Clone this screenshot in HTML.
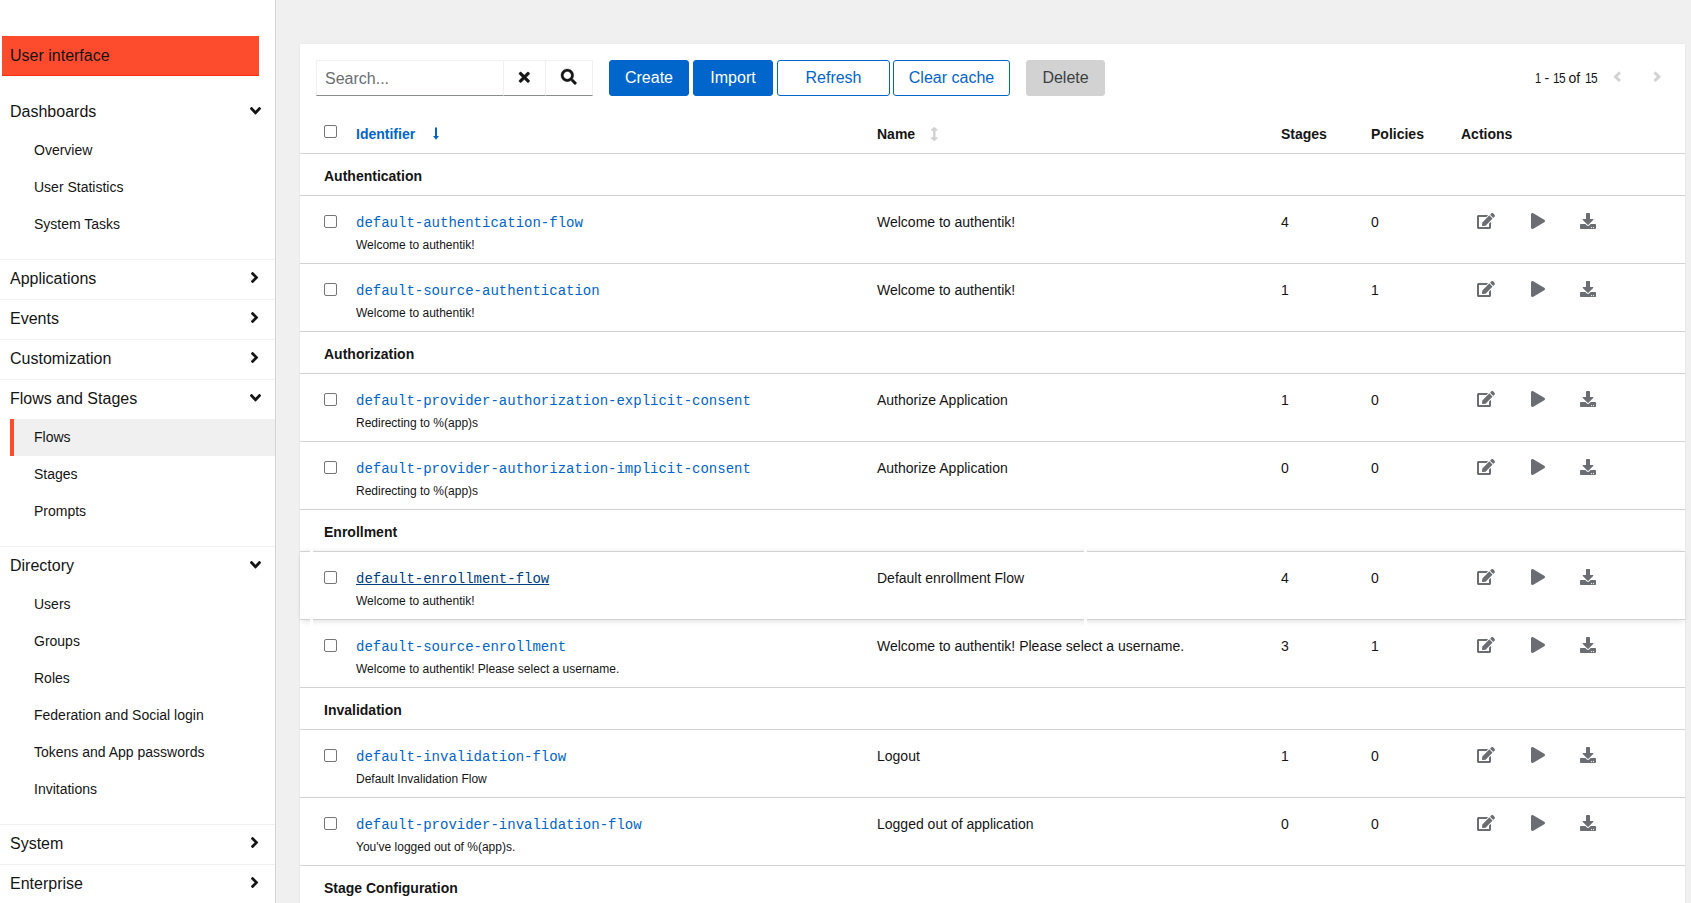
<!DOCTYPE html><html><head><meta charset="utf-8"><title>Flows - authentik</title><style>html,body{margin:0;padding:0;width:1691px;height:903px;overflow:hidden;background:#f0f0f0;}body{position:relative;font-family:"Liberation Sans", sans-serif;}.cb{position:absolute;width:13px;height:13px;box-sizing:border-box;border:1px solid #767676;border-radius:2px;background:#fff;}.hl{position:absolute;height:1px;background:#d2d2d2;}</style></head><body>
<div style="position:absolute;left:0;top:0;width:275px;height:903px;background:#fff;"></div>
<div style="position:absolute;left:275px;top:0;width:1px;height:903px;background:#d2d2d2;"></div>
<div style="position:absolute;left:276px;top:0;width:1px;height:903px;background:#f3f3f3;"></div>
<div style="position:absolute;left:2px;top:36px;width:257px;height:40px;background:#fd4b2d;"></div>
<div style="position:absolute;left:2px;top:75px;width:257px;height:1px;background:#ff2f12;"></div>
<div style="position:absolute;left:10px;top:48.46px;font-family:'Liberation Sans', sans-serif;font-size:16px;line-height:16px;font-weight:400;color:#151515;white-space:nowrap">User interface</div>
<div style="position:absolute;left:10px;top:104.46px;font-family:'Liberation Sans', sans-serif;font-size:16px;line-height:16px;font-weight:400;color:#151515;white-space:nowrap">Dashboards</div><svg style="position:absolute;left:250.3px;top:107.3px;width:11px;height:7.5px;overflow:visible" viewBox="0 152 320 208" preserveAspectRatio="none"><path fill="#151515" d="M143 352.3L7 216.3c-9.4-9.4-9.4-24.6 0-33.9l22.6-22.6c9.4-9.4 24.6-9.4 33.9 0l96.4 96.4 96.4-96.4c9.4-9.4 24.6-9.4 33.9 0l22.6 22.6c9.4 9.4 9.4 24.6 0 33.9l-136 136c-9.2 9.4-24.4 9.4-33.8 0z"/></svg>
<div style="position:absolute;left:34px;top:143.15px;font-family:'Liberation Sans', sans-serif;font-size:14px;line-height:14px;font-weight:400;color:#151515;white-space:nowrap">Overview</div>
<div style="position:absolute;left:34px;top:180.15px;font-family:'Liberation Sans', sans-serif;font-size:14px;line-height:14px;font-weight:400;color:#151515;white-space:nowrap">User Statistics</div>
<div style="position:absolute;left:34px;top:217.15px;font-family:'Liberation Sans', sans-serif;font-size:14px;line-height:14px;font-weight:400;color:#151515;white-space:nowrap">System Tasks</div>
<div class="hl" style="left:0;top:259px;width:275px;background:#f0f0f0"></div><div style="position:absolute;left:10px;top:271.46px;font-family:'Liberation Sans', sans-serif;font-size:16px;line-height:16px;font-weight:400;color:#151515;white-space:nowrap">Applications</div><svg style="position:absolute;left:250.8px;top:271.9px;width:7.2px;height:11px;overflow:visible" viewBox="24 96 208 320" preserveAspectRatio="none"><path fill="#151515" d="M224.3 273l-136 136c-9.4 9.4-24.6 9.4-33.9 0l-22.6-22.6c-9.4-9.4-9.4-24.6 0-33.9l96.4-96.4-96.4-96.4c-9.4-9.4-9.4-24.6 0-33.9L54.3 103c9.4-9.4 24.6-9.4 33.9 0l136 136c9.5 9.4 9.5 24.6.1 34z"/></svg>
<div class="hl" style="left:0;top:299px;width:275px;background:#f0f0f0"></div><div style="position:absolute;left:10px;top:311.46px;font-family:'Liberation Sans', sans-serif;font-size:16px;line-height:16px;font-weight:400;color:#151515;white-space:nowrap">Events</div><svg style="position:absolute;left:250.8px;top:311.9px;width:7.2px;height:11px;overflow:visible" viewBox="24 96 208 320" preserveAspectRatio="none"><path fill="#151515" d="M224.3 273l-136 136c-9.4 9.4-24.6 9.4-33.9 0l-22.6-22.6c-9.4-9.4-9.4-24.6 0-33.9l96.4-96.4-96.4-96.4c-9.4-9.4-9.4-24.6 0-33.9L54.3 103c9.4-9.4 24.6-9.4 33.9 0l136 136c9.5 9.4 9.5 24.6.1 34z"/></svg>
<div class="hl" style="left:0;top:339px;width:275px;background:#f0f0f0"></div><div style="position:absolute;left:10px;top:351.46px;font-family:'Liberation Sans', sans-serif;font-size:16px;line-height:16px;font-weight:400;color:#151515;white-space:nowrap">Customization</div><svg style="position:absolute;left:250.8px;top:351.9px;width:7.2px;height:11px;overflow:visible" viewBox="24 96 208 320" preserveAspectRatio="none"><path fill="#151515" d="M224.3 273l-136 136c-9.4 9.4-24.6 9.4-33.9 0l-22.6-22.6c-9.4-9.4-9.4-24.6 0-33.9l96.4-96.4-96.4-96.4c-9.4-9.4-9.4-24.6 0-33.9L54.3 103c9.4-9.4 24.6-9.4 33.9 0l136 136c9.5 9.4 9.5 24.6.1 34z"/></svg>
<div class="hl" style="left:0;top:379px;width:275px;background:#f0f0f0"></div><div style="position:absolute;left:10px;top:391.46px;font-family:'Liberation Sans', sans-serif;font-size:16px;line-height:16px;font-weight:400;color:#151515;white-space:nowrap">Flows and Stages</div><svg style="position:absolute;left:250.3px;top:394.3px;width:11px;height:7.5px;overflow:visible" viewBox="0 152 320 208" preserveAspectRatio="none"><path fill="#151515" d="M143 352.3L7 216.3c-9.4-9.4-9.4-24.6 0-33.9l22.6-22.6c9.4-9.4 24.6-9.4 33.9 0l96.4 96.4 96.4-96.4c9.4-9.4 24.6-9.4 33.9 0l22.6 22.6c9.4 9.4 9.4 24.6 0 33.9l-136 136c-9.2 9.4-24.4 9.4-33.8 0z"/></svg>
<div style="position:absolute;left:10px;top:419px;width:265px;height:37px;background:#f0f0f0;"></div><div style="position:absolute;left:10px;top:419px;width:4px;height:37px;background:#fd4b2d;"></div><div style="position:absolute;left:34px;top:430.15px;font-family:'Liberation Sans', sans-serif;font-size:14px;line-height:14px;font-weight:400;color:#151515;white-space:nowrap">Flows</div>
<div style="position:absolute;left:34px;top:467.15px;font-family:'Liberation Sans', sans-serif;font-size:14px;line-height:14px;font-weight:400;color:#151515;white-space:nowrap">Stages</div>
<div style="position:absolute;left:34px;top:504.15px;font-family:'Liberation Sans', sans-serif;font-size:14px;line-height:14px;font-weight:400;color:#151515;white-space:nowrap">Prompts</div>
<div class="hl" style="left:0;top:546px;width:275px;background:#f0f0f0"></div><div style="position:absolute;left:10px;top:558.46px;font-family:'Liberation Sans', sans-serif;font-size:16px;line-height:16px;font-weight:400;color:#151515;white-space:nowrap">Directory</div><svg style="position:absolute;left:250.3px;top:561.3px;width:11px;height:7.5px;overflow:visible" viewBox="0 152 320 208" preserveAspectRatio="none"><path fill="#151515" d="M143 352.3L7 216.3c-9.4-9.4-9.4-24.6 0-33.9l22.6-22.6c9.4-9.4 24.6-9.4 33.9 0l96.4 96.4 96.4-96.4c9.4-9.4 24.6-9.4 33.9 0l22.6 22.6c9.4 9.4 9.4 24.6 0 33.9l-136 136c-9.2 9.4-24.4 9.4-33.8 0z"/></svg>
<div style="position:absolute;left:34px;top:597.15px;font-family:'Liberation Sans', sans-serif;font-size:14px;line-height:14px;font-weight:400;color:#151515;white-space:nowrap">Users</div>
<div style="position:absolute;left:34px;top:634.15px;font-family:'Liberation Sans', sans-serif;font-size:14px;line-height:14px;font-weight:400;color:#151515;white-space:nowrap">Groups</div>
<div style="position:absolute;left:34px;top:671.15px;font-family:'Liberation Sans', sans-serif;font-size:14px;line-height:14px;font-weight:400;color:#151515;white-space:nowrap">Roles</div>
<div style="position:absolute;left:34px;top:708.15px;font-family:'Liberation Sans', sans-serif;font-size:14px;line-height:14px;font-weight:400;color:#151515;white-space:nowrap">Federation and Social login</div>
<div style="position:absolute;left:34px;top:745.15px;font-family:'Liberation Sans', sans-serif;font-size:14px;line-height:14px;font-weight:400;color:#151515;white-space:nowrap">Tokens and App passwords</div>
<div style="position:absolute;left:34px;top:782.15px;font-family:'Liberation Sans', sans-serif;font-size:14px;line-height:14px;font-weight:400;color:#151515;white-space:nowrap">Invitations</div>
<div class="hl" style="left:0;top:824px;width:275px;background:#f0f0f0"></div><div style="position:absolute;left:10px;top:836.46px;font-family:'Liberation Sans', sans-serif;font-size:16px;line-height:16px;font-weight:400;color:#151515;white-space:nowrap">System</div><svg style="position:absolute;left:250.8px;top:836.9px;width:7.2px;height:11px;overflow:visible" viewBox="24 96 208 320" preserveAspectRatio="none"><path fill="#151515" d="M224.3 273l-136 136c-9.4 9.4-24.6 9.4-33.9 0l-22.6-22.6c-9.4-9.4-9.4-24.6 0-33.9l96.4-96.4-96.4-96.4c-9.4-9.4-9.4-24.6 0-33.9L54.3 103c9.4-9.4 24.6-9.4 33.9 0l136 136c9.5 9.4 9.5 24.6.1 34z"/></svg>
<div class="hl" style="left:0;top:864px;width:275px;background:#f0f0f0"></div><div style="position:absolute;left:10px;top:876.46px;font-family:'Liberation Sans', sans-serif;font-size:16px;line-height:16px;font-weight:400;color:#151515;white-space:nowrap">Enterprise</div><svg style="position:absolute;left:250.8px;top:876.9px;width:7.2px;height:11px;overflow:visible" viewBox="24 96 208 320" preserveAspectRatio="none"><path fill="#151515" d="M224.3 273l-136 136c-9.4 9.4-24.6 9.4-33.9 0l-22.6-22.6c-9.4-9.4-9.4-24.6 0-33.9l96.4-96.4-96.4-96.4c-9.4-9.4-9.4-24.6 0-33.9L54.3 103c9.4-9.4 24.6-9.4 33.9 0l136 136c9.5 9.4 9.5 24.6.1 34z"/></svg>
<div style="position:absolute;left:300px;top:44px;width:1385px;height:880px;background:#fff;box-shadow:0 1px 2px 0 rgba(3,3,3,0.06),0 0 2px 0 rgba(3,3,3,0.04);"></div>
<div style="position:absolute;left:316px;top:60px;width:188px;height:36px;box-sizing:border-box;border:1px solid #f0f0f0;border-bottom-color:#8a8d90;background:#fff;"></div>
<div style="position:absolute;left:325px;top:71.46px;font-family:'Liberation Sans', sans-serif;font-size:16px;line-height:16px;font-weight:400;color:#6a6e73;white-space:nowrap">Search...</div>
<div style="position:absolute;left:504px;top:60px;width:42px;height:36px;box-sizing:border-box;border:1px solid #f0f0f0;border-left:0;border-bottom-color:#8a8d90;"></div>
<div style="position:absolute;left:546px;top:60px;width:47px;height:36px;box-sizing:border-box;border:1px solid #f0f0f0;border-left:0;border-bottom-color:#8a8d90;"></div>
<svg style="position:absolute;left:519.3px;top:71.8px;width:10.6px;height:10.6px;overflow:visible" viewBox="0 80 352 352" preserveAspectRatio="none"><path fill="#151515" stroke="#151515" stroke-width="16" d="M242.72 256l100.07-100.07c12.28-12.28 12.28-32.19 0-44.48l-22.24-22.24c-12.28-12.28-32.19-12.28-44.48 0L176 189.28 75.93 89.21c-12.28-12.28-32.19-12.28-44.48 0L9.21 111.45c-12.28 12.28-12.28 32.19 0 44.48L109.28 256 9.21 356.07c-12.28 12.28-12.28 32.19 0 44.48l22.24 22.24c12.28 12.28 32.2 12.28 44.48 0L176 322.72l100.07 100.07c12.28 12.28 32.2 12.28 44.480 0l22.24-22.24c12.28-12.28 12.28-32.19 0-44.48L242.72 256z"/></svg>
<svg style="position:absolute;left:561.3px;top:69.3px;width:15.6px;height:15.6px;overflow:visible" viewBox="0 0 512 512" preserveAspectRatio="none"><path fill="#151515" stroke="#151515" stroke-width="12" d="M505 442.7L405.3 343c-4.5-4.5-10.6-7-17-7H372c27.6-35.3 44-79.7 44-128C416 93.1 322.9 0 208 0S0 93.1 0 208s93.1 208 208 208c48.3 0 92.7-16.4 128-44v16.3c0 6.4 2.5 12.5 7 17l99.7 99.7c9.4 9.4 24.6 9.4 33.9 0l28.3-28.3c9.4-9.4 9.4-24.6.1-34zM208 336c-70.7 0-128-57.2-128-128 0-70.7 57.2-128 128-128 70.7 0 128 57.2 128 128 0 70.7-57.2 128-128 128z"/></svg>
<div style="position:absolute;left:609px;top:60px;width:80px;height:36px;box-sizing:border-box;border:1px solid #0066cc;border-radius:3px;background:#0066cc;color:#fff;font-size:16px;line-height:34px;text-align:center;white-space:nowrap">Create</div>
<div style="position:absolute;left:693px;top:60px;width:80px;height:36px;box-sizing:border-box;border:1px solid #0066cc;border-radius:3px;background:#0066cc;color:#fff;font-size:16px;line-height:34px;text-align:center;white-space:nowrap">Import</div>
<div style="position:absolute;left:777px;top:60px;width:113px;height:36px;box-sizing:border-box;border:1px solid #0066cc;border-radius:3px;background:#fff;color:#0066cc;font-size:16px;line-height:34px;text-align:center;white-space:nowrap">Refresh</div>
<div style="position:absolute;left:893px;top:60px;width:117px;height:36px;box-sizing:border-box;border:1px solid #0066cc;border-radius:3px;background:#fff;color:#0066cc;font-size:16px;line-height:34px;text-align:center;white-space:nowrap">Clear cache</div>
<div style="position:absolute;left:1026px;top:60px;width:79px;height:36px;box-sizing:border-box;border:1px solid #d2d2d2;border-radius:3px;background:#d2d2d2;color:#3c3f42;font-size:16px;line-height:34px;text-align:center;white-space:nowrap">Delete</div>
<div style="position:absolute;left:1535px;top:71.15px;font-family:'Liberation Sans', sans-serif;font-size:14px;line-height:14px;font-weight:400;color:#151515;white-space:nowrap;transform:scaleX(0.8);transform-origin:0 0">1</div>
<div style="position:absolute;left:1544.5px;top:71.15px;font-family:'Liberation Sans', sans-serif;font-size:14px;line-height:14px;font-weight:400;color:#151515;white-space:nowrap">-</div>
<div style="position:absolute;left:1552.5px;top:71.15px;font-family:'Liberation Sans', sans-serif;font-size:14px;line-height:14px;font-weight:400;color:#151515;white-space:nowrap;letter-spacing:-0.6px;transform:scaleX(0.85);transform-origin:0 0">15</div>
<div style="position:absolute;left:1568.5px;top:71.15px;font-family:'Liberation Sans', sans-serif;font-size:14px;line-height:14px;font-weight:400;color:#151515;white-space:nowrap">of</div>
<div style="position:absolute;left:1584.5px;top:71.15px;font-family:'Liberation Sans', sans-serif;font-size:14px;line-height:14px;font-weight:400;color:#151515;white-space:nowrap;letter-spacing:-0.6px;transform:scaleX(0.85);transform-origin:0 0">15</div>
<svg style="position:absolute;left:1613.9px;top:72.2px;width:6.4px;height:9.4px;overflow:visible" viewBox="24 96 208 320" preserveAspectRatio="none"><path fill="#d2d2d2" stroke="#d2d2d2" stroke-width="24" d="M31.7 239l136-136c9.4-9.4 24.6-9.4 33.9 0l22.6 22.6c9.4 9.4 9.4 24.6 0 33.9L127.9 256l96.4 96.4c9.4 9.4 9.4 24.6 0 33.9L201.7 409c-9.4 9.4-24.6 9.4-33.9 0l-136-136c-9.5-9.4-9.5-24.6-.1-34z"/></svg>
<svg style="position:absolute;left:1653.6px;top:72.2px;width:6.4px;height:9.4px;overflow:visible" viewBox="24 96 208 320" preserveAspectRatio="none"><path fill="#d2d2d2" stroke="#d2d2d2" stroke-width="24" d="M224.3 273l-136 136c-9.4 9.4-24.6 9.4-33.9 0l-22.6-22.6c-9.4-9.4-9.4-24.6 0-33.9l96.4-96.4-96.4-96.4c-9.4-9.4-9.4-24.6 0-33.9L54.3 103c9.4-9.4 24.6-9.4 33.9 0l136 136c9.5 9.4 9.5 24.6.1 34z"/></svg>
<div class="cb" style="left:324px;top:125px;"></div>
<div style="position:absolute;left:356px;top:127.15px;font-family:'Liberation Sans', sans-serif;font-size:14px;line-height:14px;font-weight:700;color:#0066cc;white-space:nowrap">Identifier</div>
<svg style="position:absolute;left:425px;top:122px;width:20px;height:24px" viewBox="0 0 20 24"><path fill="#0066cc" d="M10 5.6H12V14.1H14L11 17.8L8 14.1H10Z"/></svg>
<div style="position:absolute;left:877px;top:127.15px;font-family:'Liberation Sans', sans-serif;font-size:14px;line-height:14px;font-weight:700;color:#151515;white-space:nowrap">Name</div>
<svg style="position:absolute;left:931.2px;top:126.8px;width:6.6px;height:14px;overflow:visible" viewBox="20 0 216 512" preserveAspectRatio="none"><path fill="#d2d2d2" d="M214.059 377.941H168V134.059h46.059c21.382 0 32.09-25.851 16.971-40.971L144.971 7.029c-9.373-9.373-24.568-9.373-33.941 0L24.971 93.088c-15.119 15.119-4.411 40.971 16.971 40.971H88v243.882H41.941c-21.382 0-32.09 25.851-16.971 40.971l86.059 86.059c9.373 9.373 24.568 9.373 33.941 0l86.059-86.059c15.12-15.119 4.412-40.971-16.97-40.971z"/></svg>
<div style="position:absolute;left:1281px;top:127.15px;font-family:'Liberation Sans', sans-serif;font-size:14px;line-height:14px;font-weight:700;color:#151515;white-space:nowrap">Stages</div>
<div style="position:absolute;left:1371px;top:127.15px;font-family:'Liberation Sans', sans-serif;font-size:14px;line-height:14px;font-weight:700;color:#151515;white-space:nowrap">Policies</div>
<div style="position:absolute;left:1461px;top:127.15px;font-family:'Liberation Sans', sans-serif;font-size:14px;line-height:14px;font-weight:700;color:#151515;white-space:nowrap">Actions</div>
<div class="hl" style="left:300px;top:153px;width:1385px;"></div>
<div style="position:absolute;left:324px;top:169.15px;font-family:'Liberation Sans', sans-serif;font-size:14px;line-height:14px;font-weight:700;color:#151515;white-space:nowrap">Authentication</div>
<div class="hl" style="left:300px;top:195px;width:1385px;"></div>
<div class="cb" style="left:324px;top:215px;"></div>
<div style="position:absolute;left:356px;top:216.27px;font-family:'Liberation Mono', monospace;font-size:14px;line-height:14px;font-weight:400;color:#0066cc;white-space:nowrap">default-authentication-flow</div>
<div style="position:absolute;left:356px;top:238.84px;font-family:'Liberation Sans', sans-serif;font-size:12px;line-height:12px;font-weight:400;color:#151515;white-space:nowrap">Welcome to authentik!</div>
<div style="position:absolute;left:877px;top:215.15px;font-family:'Liberation Sans', sans-serif;font-size:14px;line-height:14px;font-weight:400;color:#151515;white-space:nowrap">Welcome to authentik!</div>
<div style="position:absolute;left:1281px;top:215.15px;font-family:'Liberation Sans', sans-serif;font-size:14px;line-height:14px;font-weight:400;color:#151515;white-space:nowrap">4</div>
<div style="position:absolute;left:1371px;top:215.15px;font-family:'Liberation Sans', sans-serif;font-size:14px;line-height:14px;font-weight:400;color:#151515;white-space:nowrap">0</div>
<svg style="position:absolute;left:1477px;top:213px;width:18px;height:16px;overflow:visible" viewBox="0 0 576 512" preserveAspectRatio="none"><path fill="#6a6e73" d="M402.6 83.2l90.2 90.2c3.8 3.8 3.8 10 0 13.8L274.4 405.6l-92.8 10.3c-12.4 1.4-22.9-9.100-21.5-21.5l10.3-92.8L388.8 83.2c3.8-3.8 10-3.8 13.8 0zm162-22.9l-48.8-48.8c-15.2-15.2-39.9-15.2-55.2 0l-35.4 35.4c-3.8 3.8-3.8 10 0 13.8l90.2 90.2c3.8 3.8 10 3.8 13.8 0l35.4-35.4c15.2-15.3 15.2-40 0-55.2zM384 346.2V448H64V128h229.8c3.2 0 6.2-1.3 8.5-3.5l40-40c7.6-7.6 2.2-20.5-8.5-20.5H48C21.5 64 0 85.5 0 112v352c0 26.5 21.5 48 48 48h352c26.5 0 48-21.5 48-48V306.2c0-10.7-12.9-16-20.5-8.5l-40 40c-2.200 2.3-3.500 5.3-3.500 8.5z"/></svg>
<svg style="position:absolute;left:1531px;top:213px;width:14px;height:16px;overflow:visible" viewBox="0 0 448 512" preserveAspectRatio="none"><path fill="#6a6e73" d="M424.4 214.7L72.4 6.6C43.8-10.3 0 6.1 0 47.9V464c0 37.5 40.7 60.1 72.4 41.3l352-208c31.4-18.5 31.5-64.1 0-82.6z"/></svg>
<svg style="position:absolute;left:1580px;top:213px;width:16px;height:16px;overflow:visible" viewBox="0 0 512 512" preserveAspectRatio="none"><path fill="#6a6e73" d="M216 0h80c13.3 0 24 10.7 24 24v168h87.7c17.8 0 26.7 21.5 14.1 34.1L269.7 378.3c-7.5 7.5-19.8 7.5-27.3 0L90.1 226.1c-12.6-12.6-3.700-34.1 14.1-34.1H192V24c0-13.3 10.7-24 24-24zm296 376v112c0 13.3-10.7 24-24 24H24c-13.300 0-24-10.7-24-24V376c0-13.3 10.7-24 24-24h146.7l49 49c20.1 20.1 52.5 20.1 72.6 0l49-49H488c13.3 0 24 10.7 24 24zm-124 88c0-11-9-20-20-20s-20 9-20 20 9 20 20 20 20-9 20-20zm64 0c0-11-9-20-20-20s-20 9-20 20 9 20 20 20 20-9 20-20z"/></svg>
<div class="hl" style="left:300px;top:263px;width:1385px;"></div>
<div class="cb" style="left:324px;top:283px;"></div>
<div style="position:absolute;left:356px;top:284.27px;font-family:'Liberation Mono', monospace;font-size:14px;line-height:14px;font-weight:400;color:#0066cc;white-space:nowrap">default-source-authentication</div>
<div style="position:absolute;left:356px;top:306.84px;font-family:'Liberation Sans', sans-serif;font-size:12px;line-height:12px;font-weight:400;color:#151515;white-space:nowrap">Welcome to authentik!</div>
<div style="position:absolute;left:877px;top:283.15px;font-family:'Liberation Sans', sans-serif;font-size:14px;line-height:14px;font-weight:400;color:#151515;white-space:nowrap">Welcome to authentik!</div>
<div style="position:absolute;left:1281px;top:283.15px;font-family:'Liberation Sans', sans-serif;font-size:14px;line-height:14px;font-weight:400;color:#151515;white-space:nowrap">1</div>
<div style="position:absolute;left:1371px;top:283.15px;font-family:'Liberation Sans', sans-serif;font-size:14px;line-height:14px;font-weight:400;color:#151515;white-space:nowrap">1</div>
<svg style="position:absolute;left:1477px;top:281px;width:18px;height:16px;overflow:visible" viewBox="0 0 576 512" preserveAspectRatio="none"><path fill="#6a6e73" d="M402.6 83.2l90.2 90.2c3.8 3.8 3.8 10 0 13.8L274.4 405.6l-92.8 10.3c-12.4 1.4-22.9-9.100-21.5-21.5l10.3-92.8L388.8 83.2c3.8-3.8 10-3.8 13.8 0zm162-22.9l-48.8-48.8c-15.2-15.2-39.9-15.2-55.2 0l-35.4 35.4c-3.8 3.8-3.8 10 0 13.8l90.2 90.2c3.8 3.8 10 3.8 13.8 0l35.4-35.4c15.2-15.3 15.2-40 0-55.2zM384 346.2V448H64V128h229.8c3.2 0 6.2-1.3 8.5-3.5l40-40c7.6-7.6 2.2-20.5-8.5-20.5H48C21.5 64 0 85.5 0 112v352c0 26.5 21.5 48 48 48h352c26.5 0 48-21.5 48-48V306.2c0-10.7-12.9-16-20.5-8.5l-40 40c-2.200 2.3-3.500 5.3-3.500 8.5z"/></svg>
<svg style="position:absolute;left:1531px;top:281px;width:14px;height:16px;overflow:visible" viewBox="0 0 448 512" preserveAspectRatio="none"><path fill="#6a6e73" d="M424.4 214.7L72.4 6.6C43.8-10.3 0 6.1 0 47.9V464c0 37.5 40.7 60.1 72.4 41.3l352-208c31.4-18.5 31.5-64.1 0-82.6z"/></svg>
<svg style="position:absolute;left:1580px;top:281px;width:16px;height:16px;overflow:visible" viewBox="0 0 512 512" preserveAspectRatio="none"><path fill="#6a6e73" d="M216 0h80c13.3 0 24 10.7 24 24v168h87.7c17.8 0 26.7 21.5 14.1 34.1L269.7 378.3c-7.5 7.5-19.8 7.5-27.3 0L90.1 226.1c-12.6-12.6-3.700-34.1 14.1-34.1H192V24c0-13.3 10.7-24 24-24zm296 376v112c0 13.3-10.7 24-24 24H24c-13.300 0-24-10.7-24-24V376c0-13.3 10.7-24 24-24h146.7l49 49c20.1 20.1 52.5 20.1 72.6 0l49-49H488c13.3 0 24 10.7 24 24zm-124 88c0-11-9-20-20-20s-20 9-20 20 9 20 20 20 20-9 20-20zm64 0c0-11-9-20-20-20s-20 9-20 20 9 20 20 20 20-9 20-20z"/></svg>
<div class="hl" style="left:300px;top:331px;width:1385px;"></div>
<div style="position:absolute;left:324px;top:347.15px;font-family:'Liberation Sans', sans-serif;font-size:14px;line-height:14px;font-weight:700;color:#151515;white-space:nowrap">Authorization</div>
<div class="hl" style="left:300px;top:373px;width:1385px;"></div>
<div class="cb" style="left:324px;top:393px;"></div>
<div style="position:absolute;left:356px;top:394.27px;font-family:'Liberation Mono', monospace;font-size:14px;line-height:14px;font-weight:400;color:#0066cc;white-space:nowrap">default-provider-authorization-explicit-consent</div>
<div style="position:absolute;left:356px;top:416.84px;font-family:'Liberation Sans', sans-serif;font-size:12px;line-height:12px;font-weight:400;color:#151515;white-space:nowrap">Redirecting to %(app)s</div>
<div style="position:absolute;left:877px;top:393.15px;font-family:'Liberation Sans', sans-serif;font-size:14px;line-height:14px;font-weight:400;color:#151515;white-space:nowrap">Authorize Application</div>
<div style="position:absolute;left:1281px;top:393.15px;font-family:'Liberation Sans', sans-serif;font-size:14px;line-height:14px;font-weight:400;color:#151515;white-space:nowrap">1</div>
<div style="position:absolute;left:1371px;top:393.15px;font-family:'Liberation Sans', sans-serif;font-size:14px;line-height:14px;font-weight:400;color:#151515;white-space:nowrap">0</div>
<svg style="position:absolute;left:1477px;top:391px;width:18px;height:16px;overflow:visible" viewBox="0 0 576 512" preserveAspectRatio="none"><path fill="#6a6e73" d="M402.6 83.2l90.2 90.2c3.8 3.8 3.8 10 0 13.8L274.4 405.6l-92.8 10.3c-12.4 1.4-22.9-9.100-21.5-21.5l10.3-92.8L388.8 83.2c3.8-3.8 10-3.8 13.8 0zm162-22.9l-48.8-48.8c-15.2-15.2-39.9-15.2-55.2 0l-35.4 35.4c-3.8 3.8-3.8 10 0 13.8l90.2 90.2c3.8 3.8 10 3.8 13.8 0l35.4-35.4c15.2-15.3 15.2-40 0-55.2zM384 346.2V448H64V128h229.8c3.2 0 6.2-1.3 8.5-3.5l40-40c7.6-7.6 2.2-20.5-8.5-20.5H48C21.5 64 0 85.5 0 112v352c0 26.5 21.5 48 48 48h352c26.5 0 48-21.5 48-48V306.2c0-10.7-12.9-16-20.5-8.5l-40 40c-2.200 2.3-3.500 5.3-3.500 8.5z"/></svg>
<svg style="position:absolute;left:1531px;top:391px;width:14px;height:16px;overflow:visible" viewBox="0 0 448 512" preserveAspectRatio="none"><path fill="#6a6e73" d="M424.4 214.7L72.4 6.6C43.8-10.3 0 6.1 0 47.9V464c0 37.5 40.7 60.1 72.4 41.3l352-208c31.4-18.5 31.5-64.1 0-82.6z"/></svg>
<svg style="position:absolute;left:1580px;top:391px;width:16px;height:16px;overflow:visible" viewBox="0 0 512 512" preserveAspectRatio="none"><path fill="#6a6e73" d="M216 0h80c13.3 0 24 10.7 24 24v168h87.7c17.8 0 26.7 21.5 14.1 34.1L269.7 378.3c-7.5 7.5-19.8 7.5-27.3 0L90.1 226.1c-12.6-12.6-3.700-34.1 14.1-34.1H192V24c0-13.3 10.7-24 24-24zm296 376v112c0 13.3-10.7 24-24 24H24c-13.300 0-24-10.7-24-24V376c0-13.3 10.7-24 24-24h146.7l49 49c20.1 20.1 52.5 20.1 72.6 0l49-49H488c13.3 0 24 10.7 24 24zm-124 88c0-11-9-20-20-20s-20 9-20 20 9 20 20 20 20-9 20-20zm64 0c0-11-9-20-20-20s-20 9-20 20 9 20 20 20 20-9 20-20z"/></svg>
<div class="hl" style="left:300px;top:441px;width:1385px;"></div>
<div class="cb" style="left:324px;top:461px;"></div>
<div style="position:absolute;left:356px;top:462.27px;font-family:'Liberation Mono', monospace;font-size:14px;line-height:14px;font-weight:400;color:#0066cc;white-space:nowrap">default-provider-authorization-implicit-consent</div>
<div style="position:absolute;left:356px;top:484.84px;font-family:'Liberation Sans', sans-serif;font-size:12px;line-height:12px;font-weight:400;color:#151515;white-space:nowrap">Redirecting to %(app)s</div>
<div style="position:absolute;left:877px;top:461.15px;font-family:'Liberation Sans', sans-serif;font-size:14px;line-height:14px;font-weight:400;color:#151515;white-space:nowrap">Authorize Application</div>
<div style="position:absolute;left:1281px;top:461.15px;font-family:'Liberation Sans', sans-serif;font-size:14px;line-height:14px;font-weight:400;color:#151515;white-space:nowrap">0</div>
<div style="position:absolute;left:1371px;top:461.15px;font-family:'Liberation Sans', sans-serif;font-size:14px;line-height:14px;font-weight:400;color:#151515;white-space:nowrap">0</div>
<svg style="position:absolute;left:1477px;top:459px;width:18px;height:16px;overflow:visible" viewBox="0 0 576 512" preserveAspectRatio="none"><path fill="#6a6e73" d="M402.6 83.2l90.2 90.2c3.8 3.8 3.8 10 0 13.8L274.4 405.6l-92.8 10.3c-12.4 1.4-22.9-9.100-21.5-21.5l10.3-92.8L388.8 83.2c3.8-3.8 10-3.8 13.8 0zm162-22.9l-48.8-48.8c-15.2-15.2-39.9-15.2-55.2 0l-35.4 35.4c-3.8 3.8-3.8 10 0 13.8l90.2 90.2c3.8 3.8 10 3.8 13.8 0l35.4-35.4c15.2-15.3 15.2-40 0-55.2zM384 346.2V448H64V128h229.8c3.2 0 6.2-1.3 8.5-3.5l40-40c7.6-7.6 2.2-20.5-8.5-20.5H48C21.5 64 0 85.5 0 112v352c0 26.5 21.5 48 48 48h352c26.5 0 48-21.5 48-48V306.2c0-10.7-12.9-16-20.5-8.5l-40 40c-2.200 2.3-3.500 5.3-3.500 8.5z"/></svg>
<svg style="position:absolute;left:1531px;top:459px;width:14px;height:16px;overflow:visible" viewBox="0 0 448 512" preserveAspectRatio="none"><path fill="#6a6e73" d="M424.4 214.7L72.4 6.6C43.8-10.3 0 6.1 0 47.9V464c0 37.5 40.7 60.1 72.4 41.3l352-208c31.4-18.5 31.5-64.1 0-82.6z"/></svg>
<svg style="position:absolute;left:1580px;top:459px;width:16px;height:16px;overflow:visible" viewBox="0 0 512 512" preserveAspectRatio="none"><path fill="#6a6e73" d="M216 0h80c13.3 0 24 10.7 24 24v168h87.7c17.8 0 26.7 21.5 14.1 34.1L269.7 378.3c-7.5 7.5-19.8 7.5-27.3 0L90.1 226.1c-12.6-12.6-3.700-34.1 14.1-34.1H192V24c0-13.3 10.7-24 24-24zm296 376v112c0 13.3-10.7 24-24 24H24c-13.300 0-24-10.7-24-24V376c0-13.3 10.7-24 24-24h146.7l49 49c20.1 20.1 52.5 20.1 72.6 0l49-49H488c13.3 0 24 10.7 24 24zm-124 88c0-11-9-20-20-20s-20 9-20 20 9 20 20 20 20-9 20-20zm64 0c0-11-9-20-20-20s-20 9-20 20 9 20 20 20 20-9 20-20z"/></svg>
<div class="hl" style="left:300px;top:509px;width:1385px;"></div>
<div style="position:absolute;left:324px;top:525.15px;font-family:'Liberation Sans', sans-serif;font-size:14px;line-height:14px;font-weight:700;color:#151515;white-space:nowrap">Enrollment</div>
<div class="hl" style="left:300px;top:551px;width:1385px;"></div>
<div style="position:absolute;left:300px;top:551px;width:1385px;height:68px;background:#fff;box-shadow:0 4px 6px -2px rgba(3,3,3,0.14), 0 -2px 4px -2px rgba(3,3,3,0.1);"></div>
<div class="hl" style="left:300px;top:551px;width:1385px;"></div>
<div class="cb" style="left:324px;top:571px;"></div>
<div style="position:absolute;left:356px;top:572.27px;font-family:'Liberation Mono', monospace;font-size:14px;line-height:14px;font-weight:400;color:#004080;white-space:nowrap;text-decoration:underline">default-enrollment-flow</div>
<div style="position:absolute;left:356px;top:594.84px;font-family:'Liberation Sans', sans-serif;font-size:12px;line-height:12px;font-weight:400;color:#151515;white-space:nowrap">Welcome to authentik!</div>
<div style="position:absolute;left:877px;top:571.15px;font-family:'Liberation Sans', sans-serif;font-size:14px;line-height:14px;font-weight:400;color:#151515;white-space:nowrap">Default enrollment Flow</div>
<div style="position:absolute;left:1281px;top:571.15px;font-family:'Liberation Sans', sans-serif;font-size:14px;line-height:14px;font-weight:400;color:#151515;white-space:nowrap">4</div>
<div style="position:absolute;left:1371px;top:571.15px;font-family:'Liberation Sans', sans-serif;font-size:14px;line-height:14px;font-weight:400;color:#151515;white-space:nowrap">0</div>
<svg style="position:absolute;left:1477px;top:569px;width:18px;height:16px;overflow:visible" viewBox="0 0 576 512" preserveAspectRatio="none"><path fill="#6a6e73" d="M402.6 83.2l90.2 90.2c3.8 3.8 3.8 10 0 13.8L274.4 405.6l-92.8 10.3c-12.4 1.4-22.9-9.100-21.5-21.5l10.3-92.8L388.8 83.2c3.8-3.8 10-3.8 13.8 0zm162-22.9l-48.8-48.8c-15.2-15.2-39.9-15.2-55.2 0l-35.4 35.4c-3.8 3.8-3.8 10 0 13.8l90.2 90.2c3.8 3.8 10 3.8 13.8 0l35.4-35.4c15.2-15.3 15.2-40 0-55.2zM384 346.2V448H64V128h229.8c3.2 0 6.2-1.3 8.5-3.5l40-40c7.6-7.6 2.2-20.5-8.5-20.5H48C21.5 64 0 85.5 0 112v352c0 26.5 21.5 48 48 48h352c26.5 0 48-21.5 48-48V306.2c0-10.7-12.9-16-20.5-8.5l-40 40c-2.200 2.3-3.500 5.3-3.500 8.5z"/></svg>
<svg style="position:absolute;left:1531px;top:569px;width:14px;height:16px;overflow:visible" viewBox="0 0 448 512" preserveAspectRatio="none"><path fill="#6a6e73" d="M424.4 214.7L72.4 6.6C43.8-10.3 0 6.1 0 47.9V464c0 37.5 40.7 60.1 72.4 41.3l352-208c31.4-18.5 31.5-64.1 0-82.6z"/></svg>
<svg style="position:absolute;left:1580px;top:569px;width:16px;height:16px;overflow:visible" viewBox="0 0 512 512" preserveAspectRatio="none"><path fill="#6a6e73" d="M216 0h80c13.3 0 24 10.7 24 24v168h87.7c17.8 0 26.7 21.5 14.1 34.1L269.7 378.3c-7.5 7.5-19.8 7.5-27.3 0L90.1 226.1c-12.6-12.6-3.700-34.1 14.1-34.1H192V24c0-13.3 10.7-24 24-24zm296 376v112c0 13.3-10.7 24-24 24H24c-13.300 0-24-10.7-24-24V376c0-13.3 10.7-24 24-24h146.7l49 49c20.1 20.1 52.5 20.1 72.6 0l49-49H488c13.3 0 24 10.7 24 24zm-124 88c0-11-9-20-20-20s-20 9-20 20 9 20 20 20 20-9 20-20zm64 0c0-11-9-20-20-20s-20 9-20 20 9 20 20 20 20-9 20-20z"/></svg>
<div class="hl" style="left:300px;top:619px;width:1385px;"></div>
<div style="position:absolute;left:310px;top:547px;width:3px;height:5px;background:#fff"></div>
<div style="position:absolute;left:310px;top:619px;width:3px;height:7px;background:#fff"></div>
<div style="position:absolute;left:1084px;top:547px;width:3px;height:5px;background:#fff"></div>
<div style="position:absolute;left:1084px;top:619px;width:3px;height:7px;background:#fff"></div>
<div class="cb" style="left:324px;top:639px;"></div>
<div style="position:absolute;left:356px;top:640.27px;font-family:'Liberation Mono', monospace;font-size:14px;line-height:14px;font-weight:400;color:#0066cc;white-space:nowrap">default-source-enrollment</div>
<div style="position:absolute;left:356px;top:662.84px;font-family:'Liberation Sans', sans-serif;font-size:12px;line-height:12px;font-weight:400;color:#151515;white-space:nowrap">Welcome to authentik! Please select a username.</div>
<div style="position:absolute;left:877px;top:639.15px;font-family:'Liberation Sans', sans-serif;font-size:14px;line-height:14px;font-weight:400;color:#151515;white-space:nowrap">Welcome to authentik! Please select a username.</div>
<div style="position:absolute;left:1281px;top:639.15px;font-family:'Liberation Sans', sans-serif;font-size:14px;line-height:14px;font-weight:400;color:#151515;white-space:nowrap">3</div>
<div style="position:absolute;left:1371px;top:639.15px;font-family:'Liberation Sans', sans-serif;font-size:14px;line-height:14px;font-weight:400;color:#151515;white-space:nowrap">1</div>
<svg style="position:absolute;left:1477px;top:637px;width:18px;height:16px;overflow:visible" viewBox="0 0 576 512" preserveAspectRatio="none"><path fill="#6a6e73" d="M402.6 83.2l90.2 90.2c3.8 3.8 3.8 10 0 13.8L274.4 405.6l-92.8 10.3c-12.4 1.4-22.9-9.100-21.5-21.5l10.3-92.8L388.8 83.2c3.8-3.8 10-3.8 13.8 0zm162-22.9l-48.8-48.8c-15.2-15.2-39.9-15.2-55.2 0l-35.4 35.4c-3.8 3.8-3.8 10 0 13.8l90.2 90.2c3.8 3.8 10 3.8 13.8 0l35.4-35.4c15.2-15.3 15.2-40 0-55.2zM384 346.2V448H64V128h229.8c3.2 0 6.2-1.3 8.5-3.5l40-40c7.6-7.6 2.2-20.5-8.5-20.5H48C21.5 64 0 85.5 0 112v352c0 26.5 21.5 48 48 48h352c26.5 0 48-21.5 48-48V306.2c0-10.7-12.9-16-20.5-8.5l-40 40c-2.200 2.3-3.500 5.3-3.500 8.5z"/></svg>
<svg style="position:absolute;left:1531px;top:637px;width:14px;height:16px;overflow:visible" viewBox="0 0 448 512" preserveAspectRatio="none"><path fill="#6a6e73" d="M424.4 214.7L72.4 6.6C43.8-10.3 0 6.1 0 47.9V464c0 37.5 40.7 60.1 72.4 41.3l352-208c31.4-18.5 31.5-64.1 0-82.6z"/></svg>
<svg style="position:absolute;left:1580px;top:637px;width:16px;height:16px;overflow:visible" viewBox="0 0 512 512" preserveAspectRatio="none"><path fill="#6a6e73" d="M216 0h80c13.3 0 24 10.7 24 24v168h87.7c17.8 0 26.7 21.5 14.1 34.1L269.7 378.3c-7.5 7.5-19.8 7.5-27.3 0L90.1 226.1c-12.6-12.6-3.700-34.1 14.1-34.1H192V24c0-13.3 10.7-24 24-24zm296 376v112c0 13.3-10.7 24-24 24H24c-13.300 0-24-10.7-24-24V376c0-13.3 10.7-24 24-24h146.7l49 49c20.1 20.1 52.5 20.1 72.6 0l49-49H488c13.3 0 24 10.7 24 24zm-124 88c0-11-9-20-20-20s-20 9-20 20 9 20 20 20 20-9 20-20zm64 0c0-11-9-20-20-20s-20 9-20 20 9 20 20 20 20-9 20-20z"/></svg>
<div class="hl" style="left:300px;top:687px;width:1385px;"></div>
<div style="position:absolute;left:324px;top:703.15px;font-family:'Liberation Sans', sans-serif;font-size:14px;line-height:14px;font-weight:700;color:#151515;white-space:nowrap">Invalidation</div>
<div class="hl" style="left:300px;top:729px;width:1385px;"></div>
<div class="cb" style="left:324px;top:749px;"></div>
<div style="position:absolute;left:356px;top:750.27px;font-family:'Liberation Mono', monospace;font-size:14px;line-height:14px;font-weight:400;color:#0066cc;white-space:nowrap">default-invalidation-flow</div>
<div style="position:absolute;left:356px;top:772.84px;font-family:'Liberation Sans', sans-serif;font-size:12px;line-height:12px;font-weight:400;color:#151515;white-space:nowrap">Default Invalidation Flow</div>
<div style="position:absolute;left:877px;top:749.15px;font-family:'Liberation Sans', sans-serif;font-size:14px;line-height:14px;font-weight:400;color:#151515;white-space:nowrap">Logout</div>
<div style="position:absolute;left:1281px;top:749.15px;font-family:'Liberation Sans', sans-serif;font-size:14px;line-height:14px;font-weight:400;color:#151515;white-space:nowrap">1</div>
<div style="position:absolute;left:1371px;top:749.15px;font-family:'Liberation Sans', sans-serif;font-size:14px;line-height:14px;font-weight:400;color:#151515;white-space:nowrap">0</div>
<svg style="position:absolute;left:1477px;top:747px;width:18px;height:16px;overflow:visible" viewBox="0 0 576 512" preserveAspectRatio="none"><path fill="#6a6e73" d="M402.6 83.2l90.2 90.2c3.8 3.8 3.8 10 0 13.8L274.4 405.6l-92.8 10.3c-12.4 1.4-22.9-9.100-21.5-21.5l10.3-92.8L388.8 83.2c3.8-3.8 10-3.8 13.8 0zm162-22.9l-48.8-48.8c-15.2-15.2-39.9-15.2-55.2 0l-35.4 35.4c-3.8 3.8-3.8 10 0 13.8l90.2 90.2c3.8 3.8 10 3.8 13.8 0l35.4-35.4c15.2-15.3 15.2-40 0-55.2zM384 346.2V448H64V128h229.8c3.2 0 6.2-1.3 8.5-3.5l40-40c7.6-7.6 2.2-20.5-8.5-20.5H48C21.5 64 0 85.5 0 112v352c0 26.5 21.5 48 48 48h352c26.5 0 48-21.5 48-48V306.2c0-10.7-12.9-16-20.5-8.5l-40 40c-2.200 2.3-3.500 5.3-3.500 8.5z"/></svg>
<svg style="position:absolute;left:1531px;top:747px;width:14px;height:16px;overflow:visible" viewBox="0 0 448 512" preserveAspectRatio="none"><path fill="#6a6e73" d="M424.4 214.7L72.4 6.6C43.8-10.3 0 6.1 0 47.9V464c0 37.5 40.7 60.1 72.4 41.3l352-208c31.4-18.5 31.5-64.1 0-82.6z"/></svg>
<svg style="position:absolute;left:1580px;top:747px;width:16px;height:16px;overflow:visible" viewBox="0 0 512 512" preserveAspectRatio="none"><path fill="#6a6e73" d="M216 0h80c13.3 0 24 10.7 24 24v168h87.7c17.8 0 26.7 21.5 14.1 34.1L269.7 378.3c-7.5 7.5-19.8 7.5-27.3 0L90.1 226.1c-12.6-12.6-3.700-34.1 14.1-34.1H192V24c0-13.3 10.7-24 24-24zm296 376v112c0 13.3-10.7 24-24 24H24c-13.300 0-24-10.7-24-24V376c0-13.3 10.7-24 24-24h146.7l49 49c20.1 20.1 52.5 20.1 72.6 0l49-49H488c13.3 0 24 10.7 24 24zm-124 88c0-11-9-20-20-20s-20 9-20 20 9 20 20 20 20-9 20-20zm64 0c0-11-9-20-20-20s-20 9-20 20 9 20 20 20 20-9 20-20z"/></svg>
<div class="hl" style="left:300px;top:797px;width:1385px;"></div>
<div class="cb" style="left:324px;top:817px;"></div>
<div style="position:absolute;left:356px;top:818.27px;font-family:'Liberation Mono', monospace;font-size:14px;line-height:14px;font-weight:400;color:#0066cc;white-space:nowrap">default-provider-invalidation-flow</div>
<div style="position:absolute;left:356px;top:840.84px;font-family:'Liberation Sans', sans-serif;font-size:12px;line-height:12px;font-weight:400;color:#151515;white-space:nowrap">You've logged out of %(app)s.</div>
<div style="position:absolute;left:877px;top:817.15px;font-family:'Liberation Sans', sans-serif;font-size:14px;line-height:14px;font-weight:400;color:#151515;white-space:nowrap">Logged out of application</div>
<div style="position:absolute;left:1281px;top:817.15px;font-family:'Liberation Sans', sans-serif;font-size:14px;line-height:14px;font-weight:400;color:#151515;white-space:nowrap">0</div>
<div style="position:absolute;left:1371px;top:817.15px;font-family:'Liberation Sans', sans-serif;font-size:14px;line-height:14px;font-weight:400;color:#151515;white-space:nowrap">0</div>
<svg style="position:absolute;left:1477px;top:815px;width:18px;height:16px;overflow:visible" viewBox="0 0 576 512" preserveAspectRatio="none"><path fill="#6a6e73" d="M402.6 83.2l90.2 90.2c3.8 3.8 3.8 10 0 13.8L274.4 405.6l-92.8 10.3c-12.4 1.4-22.9-9.100-21.5-21.5l10.3-92.8L388.8 83.2c3.8-3.8 10-3.8 13.8 0zm162-22.9l-48.8-48.8c-15.2-15.2-39.9-15.2-55.2 0l-35.4 35.4c-3.8 3.8-3.8 10 0 13.8l90.2 90.2c3.8 3.8 10 3.8 13.8 0l35.4-35.4c15.2-15.3 15.2-40 0-55.2zM384 346.2V448H64V128h229.8c3.2 0 6.2-1.3 8.5-3.5l40-40c7.6-7.6 2.2-20.5-8.5-20.5H48C21.5 64 0 85.5 0 112v352c0 26.5 21.5 48 48 48h352c26.5 0 48-21.5 48-48V306.2c0-10.7-12.9-16-20.5-8.5l-40 40c-2.200 2.3-3.500 5.3-3.500 8.5z"/></svg>
<svg style="position:absolute;left:1531px;top:815px;width:14px;height:16px;overflow:visible" viewBox="0 0 448 512" preserveAspectRatio="none"><path fill="#6a6e73" d="M424.4 214.7L72.4 6.6C43.8-10.3 0 6.1 0 47.9V464c0 37.5 40.7 60.1 72.4 41.3l352-208c31.4-18.5 31.5-64.1 0-82.6z"/></svg>
<svg style="position:absolute;left:1580px;top:815px;width:16px;height:16px;overflow:visible" viewBox="0 0 512 512" preserveAspectRatio="none"><path fill="#6a6e73" d="M216 0h80c13.3 0 24 10.7 24 24v168h87.7c17.8 0 26.7 21.5 14.1 34.1L269.7 378.3c-7.5 7.5-19.8 7.5-27.3 0L90.1 226.1c-12.6-12.6-3.700-34.1 14.1-34.1H192V24c0-13.3 10.7-24 24-24zm296 376v112c0 13.3-10.7 24-24 24H24c-13.300 0-24-10.7-24-24V376c0-13.3 10.7-24 24-24h146.7l49 49c20.1 20.1 52.5 20.1 72.6 0l49-49H488c13.3 0 24 10.7 24 24zm-124 88c0-11-9-20-20-20s-20 9-20 20 9 20 20 20 20-9 20-20zm64 0c0-11-9-20-20-20s-20 9-20 20 9 20 20 20 20-9 20-20z"/></svg>
<div class="hl" style="left:300px;top:865px;width:1385px;"></div>
<div style="position:absolute;left:324px;top:881.15px;font-family:'Liberation Sans', sans-serif;font-size:14px;line-height:14px;font-weight:700;color:#151515;white-space:nowrap">Stage Configuration</div>
<div class="hl" style="left:300px;top:907px;width:1385px;"></div>
</body></html>
